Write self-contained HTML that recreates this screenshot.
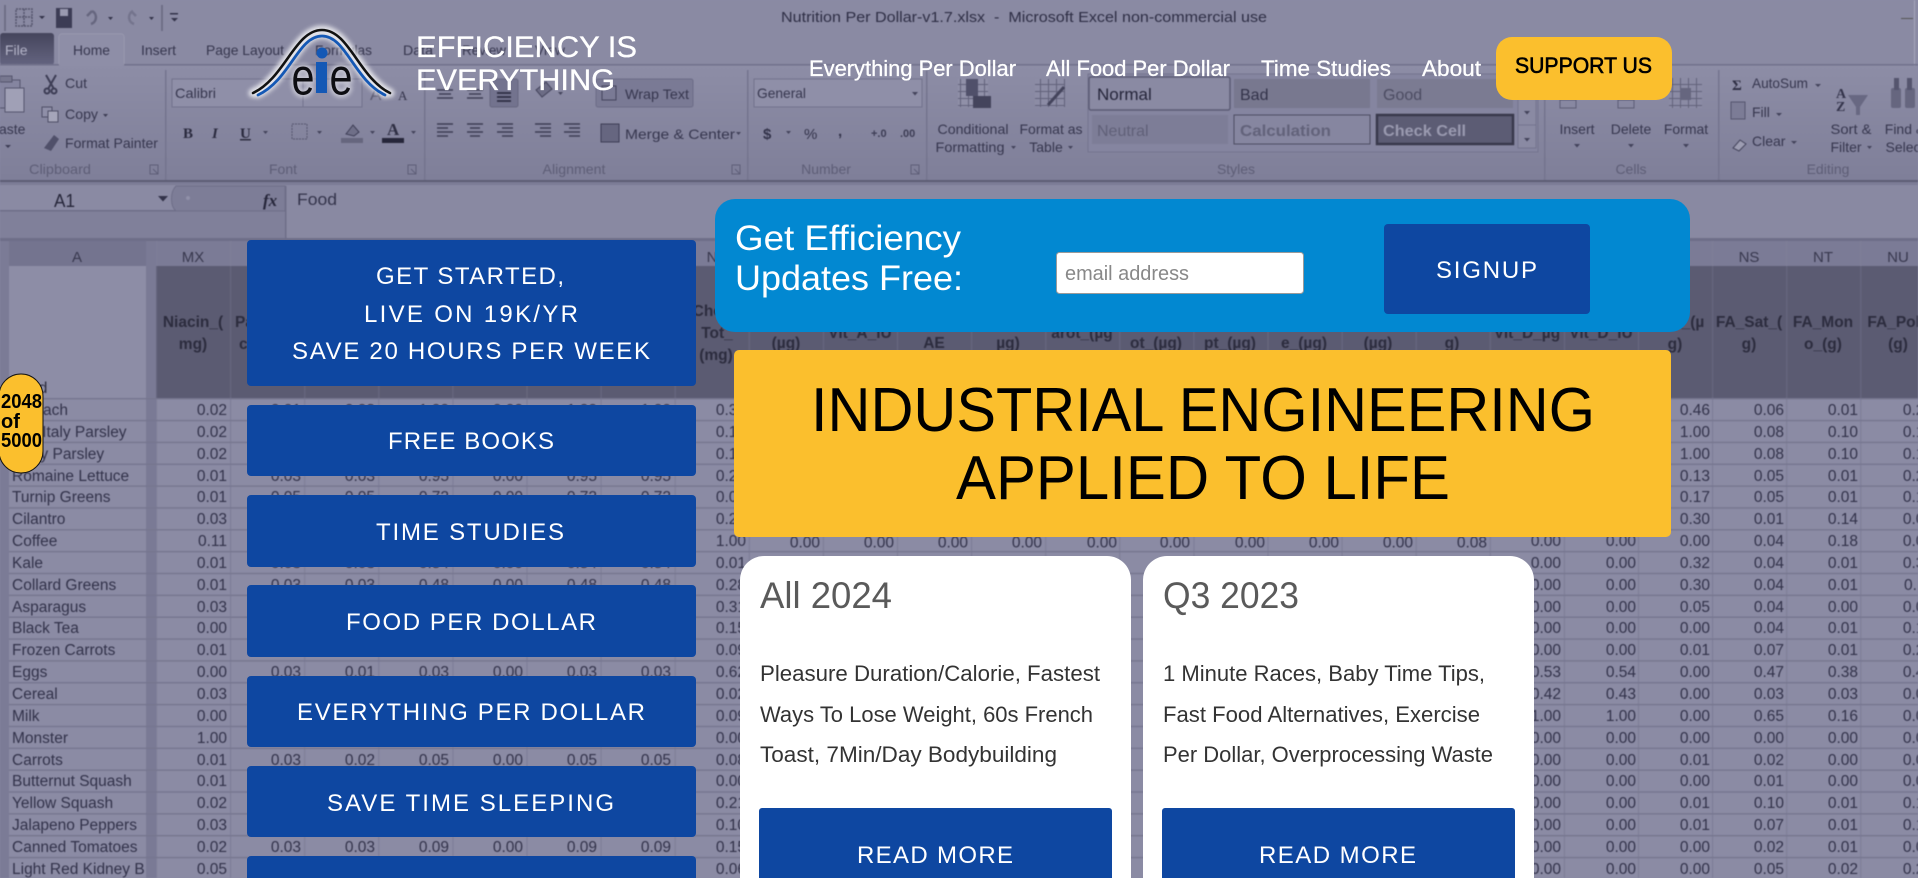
<!DOCTYPE html>
<html lang="en"><head><meta charset="utf-8"><title>Efficiency Is Everything</title>
<style>
html,body{margin:0;padding:0;background:#8b8ba4}
#p{position:relative;width:1918px;height:878px;overflow:hidden;font-family:"Liberation Sans",sans-serif}
svg{position:absolute;left:0;top:0}
#x{position:absolute;left:0;top:0;width:1918px;height:878px;filter:blur(.55px);overflow:hidden}
.c{position:absolute;top:400px;text-align:right;font-size:15.5px;line-height:21.85px;color:#32324a;white-space:nowrap;width:74px}
.n{text-align:left;left:12px;width:133px;overflow:hidden}
.t{font-size:14px;fill:#36364e}
.h{font-size:15.5px;font-weight:700;fill:#2c2c3e;text-anchor:middle}
</style></head><body><div id="p">
<div id="x">
<svg width="1918" height="878" viewBox="0 0 1918 878">
<defs>
<linearGradient id="r" x1="0" y1="0" x2="0" y2="1"><stop offset="0" stop-color="#8d8da6"/><stop offset="1" stop-color="#7f7f99"/></linearGradient>
<linearGradient id="f" x1="0" y1="0" x2="0" y2="1"><stop offset="0" stop-color="#45455c"/><stop offset="1" stop-color="#646480"/></linearGradient>
<pattern id="hl" x="0" y="398" width="10" height="21.85" patternUnits="userSpaceOnUse"><rect width="10" height="1.4" fill="#76768f"/></pattern>
<pattern id="vl" x="230" y="0" width="74.1" height="10" patternUnits="userSpaceOnUse"><rect width="1.2" height="10" fill="#7e7e98"/></pattern>
<pattern id="vd" x="230" y="0" width="74.1" height="10" patternUnits="userSpaceOnUse"><rect width="1.2" height="10" fill="#67677f"/></pattern>
<pattern id="gr" x="0" y="0" width="8" height="7" patternUnits="userSpaceOnUse"><path d="M0 .5H8M.5 0V7" stroke="#62627b" stroke-width="1" fill="none"/></pattern>
</defs>
<rect width="1918" height="878" fill="#8b8ba4"/>
<!-- title bar -->
<rect width="1918" height="65" fill="#8a8aa3"/>
<text x="781" y="22" font-size="15" fill="#2e2e45" textLength="486" lengthAdjust="spacingAndGlyphs">Nutrition Per Dollar-v1.7.xlsx&#160;&#160;-&#160;&#160;Microsoft Excel non-commercial use</text>
<rect x="1901" y="18" width="12" height="1" fill="#555"/><rect x="1914" y="0" width="1" height="118" fill="#a5a5bb"/>
<g fill="none" stroke="#55556d" stroke-width="1.5">
<rect x="16" y="9" width="16" height="17" stroke-dasharray="2 1"/><line x1="24" y1="9" x2="24" y2="26" stroke-dasharray="2 1"/><line x1="16" y1="17" x2="32" y2="17" stroke-dasharray="2 1"/>
<path d="M92 11a7 7 0 0 1-1 13M92 11l-5 5" stroke="#66667f" stroke-width="2.5"/>
<path d="M133 11a7 7 0 0 0 1 13M131 11l5 5" stroke="#74748d" stroke-width="2.5"/>
<line x1="162" y1="5" x2="162" y2="31" stroke="#66667f"/><line x1="5" y1="5" x2="5" y2="31" stroke="#66667f"/>
</g>
<rect x="56" y="8" width="16" height="20" fill="#3c3c55"/><rect x="60" y="9" width="8" height="7" fill="#9a9ab0"/>
<path d="M39 16h6l-3 3zM108 17h5l-2.500 3zM149 17h5l-2.500 3zM171 18h7l-3.500 3.500z" fill="#33334a"/><rect x="170" y="13" width="8" height="1.500" fill="#33334a"/>
<!-- tabs -->
<rect x="0" y="33" width="54" height="32" rx="3" fill="url(#f)"/>
<text x="5" y="55" class="t" style="fill:#b4b4c8">File</text>
<path d="M59 65V37a3 3 0 0 1 3-3h59a3 3 0 0 1 3 3v28" fill="#94949f" stroke="#a2a2b6"/>
<rect x="59" y="34" width="65" height="32" rx="3" fill="#8e8ea7"/>
<text x="73" y="55" class="t" textLength="37" lengthAdjust="spacingAndGlyphs">Home</text>
<text x="141" y="55" class="t" textLength="35" lengthAdjust="spacingAndGlyphs">Insert</text>
<text x="206" y="55" class="t" textLength="78" lengthAdjust="spacingAndGlyphs">Page Layout</text>
<text x="315" y="55" class="t" textLength="57" lengthAdjust="spacingAndGlyphs">Formulas</text>
<text x="403" y="55" class="t" textLength="30" lengthAdjust="spacingAndGlyphs">Data</text>
<text x="462" y="55" class="t" textLength="44" lengthAdjust="spacingAndGlyphs">Review</text>
<text x="535" y="55" class="t" textLength="30" lengthAdjust="spacingAndGlyphs">View</text>
<rect x="124" y="64" width="1794" height="1.500" fill="#72728c"/><rect x="0" y="64" width="59" height="1.500" fill="#72728c"/>
<!-- ribbon -->
<rect y="66" width="1918" height="114" fill="url(#r)"/>
<rect y="180" width="1918" height="2" fill="#5c5c74"/><rect y="182" width="1918" height="3" fill="#7c7c96"/>
<g fill="#74748e">
<rect x="165" y="70" width="1.500" height="110"/><rect x="424" y="70" width="1.500" height="110"/><rect x="747" y="70" width="1.500" height="110"/><rect x="926" y="70" width="1.500" height="110"/><rect x="1544" y="70" width="1.500" height="110"/><rect x="1718" y="70" width="1.500" height="110"/>
</g>
<g font-size="14" fill="#5d5d76" text-anchor="middle">
<text x="60" y="174" textLength="62" lengthAdjust="spacingAndGlyphs">Clipboard</text><text x="283" y="174">Font</text><text x="574" y="174" textLength="63" lengthAdjust="spacingAndGlyphs">Alignment</text><text x="826" y="174">Number</text><text x="1236" y="174">Styles</text><text x="1631" y="174">Cells</text><text x="1828" y="174">Editing</text>
</g>
<g fill="none" stroke="#5e5e77"><path d="M150 165h8v9h-8zM153 169l5 5"/><path d="M408 165h8v9h-8zM411 169l5 5"/><path d="M732 165h8v9h-8zM735 169l5 5"/><path d="M911 165h8v9h-8zM914 169l5 5"/></g>
<!-- clipboard -->
<rect x="-4" y="80" width="24" height="28" fill="#8585a0" stroke="#55556e"/><rect x="5" y="88" width="19" height="24" fill="#a0a0b6" stroke="#55556e"/><rect x="0" y="76" width="12" height="6" fill="#77778f" stroke="#55556e"/>
<text x="-1" y="134" class="t">aste</text><path d="M5 145h6l-3 3z" fill="#3d3d55"/>
<text x="65" y="88" class="t" textLength="22" lengthAdjust="spacingAndGlyphs">Cut</text>
<text x="65" y="119" class="t" textLength="33" lengthAdjust="spacingAndGlyphs">Copy</text>
<text x="65" y="148" class="t" textLength="93" lengthAdjust="spacingAndGlyphs">Format Painter</text>
<path d="M46 75l8 14M56 75l-8 14" stroke="#3d3d55" stroke-width="2"/><circle cx="47" cy="91" r="2.500" fill="none" stroke="#3d3d55" stroke-width="2"/><circle cx="54" cy="91" r="2.500" fill="none" stroke="#3d3d55" stroke-width="2"/>
<rect x="42" y="107" width="10" height="10" fill="#8f8fa8" stroke="#4e4e66"/><rect x="48" y="111" width="10" height="11" fill="#a5a5ba" stroke="#4e4e66"/>
<path d="M44 148l10-13 5 4-8 12z" fill="#50506a"/><path d="M103 114h5l-2.500 3z" fill="#3d3d55"/>
<!-- font -->
<rect x="172" y="79" width="131" height="28" fill="#8f8fa8" stroke="#72728c"/><rect x="303" y="79" width="59" height="28" fill="#8f8fa8" stroke="#72728c"/>
<text x="175" y="98" class="t" textLength="41" lengthAdjust="spacingAndGlyphs">Calibri</text>
<text x="183" y="138" font-size="15" font-weight="700" font-family="Liberation Serif" fill="#2b2b3f">B</text>
<text x="212" y="138" font-size="15" font-style="italic" font-weight="700" font-family="Liberation Serif" fill="#2b2b3f">I</text>
<text x="240" y="138" font-size="15" font-weight="700" font-family="Liberation Serif" fill="#2b2b3f" text-decoration="underline">U</text>
<path d="M263 131h5l-2.500 3zM317 131h5l-2.500 3zM370 131h5l-2.500 3zM411 131h5l-2.500 3z" fill="#44445c"/>
<rect x="292" y="124" width="15" height="15" fill="none" stroke="#55556e" stroke-dasharray="2 1"/>
<rect x="341" y="138" width="22" height="5" fill="#66667e"/><path d="M346 134l7-9 6 7-5 4z" fill="#6f6f88" stroke="#3d3d55"/>
<text x="387" y="135" font-size="17" font-weight="700" font-family="Liberation Serif" fill="#2f2f44">A</text><rect x="382" y="138" width="22" height="5" fill="#26263a"/>
<text x="370" y="100" font-size="17" fill="#5a5a72">A</text><text x="398" y="100" font-size="13" font-family="Liberation Serif" fill="#33334a">A</text>
<!-- align -->
<g stroke="#3d3d55" stroke-width="1.600">
<path d="M437 90h16M439 94h12M437 98h16M467 90h16M469 94h12M467 98h16"/>
<path d="M437 124h16M437 128h11M437 132h16M437 136h11M467 124h16M470 128h10M467 132h16M470 136h10M497 124h16M502 128h11M497 132h16M502 136h11"/>
<path d="M535 124h16M540 128h11M535 132h16M540 136h11M564 124h16M569 128h11M564 132h16M569 136h11"/>
</g>
<rect x="490" y="79" width="28" height="28" rx="2" fill="#73738e" stroke="#66667f"/><path d="M497 93h14M497 97h14M497 101h14" stroke="#2d2d42" stroke-width="1.800"/>
<path d="M536 90l10-8 6 7-10 8z" fill="#6c6c85" stroke="#44445c"/><path d="M558 92h5l-2.500 3z" fill="#44445c"/>
<rect x="596" y="79" width="97" height="28" rx="2" fill="#7a7a95" stroke="#6c6c87"/>
<rect x="602" y="86" width="14" height="14" fill="none" stroke="#44445c"/>
<text x="625" y="99" class="t" textLength="64" lengthAdjust="spacingAndGlyphs">Wrap Text</text>
<rect x="601" y="124" width="18" height="18" fill="#666680" stroke="#3d3d55"/>
<text x="625" y="139" class="t" textLength="110" lengthAdjust="spacingAndGlyphs">Merge &amp; Center</text><path d="M736 132h5l-2.500 3z" fill="#44445c"/>
<!-- number -->
<rect x="754" y="79" width="168" height="28" fill="#8f8fa8" stroke="#72728c"/>
<text x="757" y="98" class="t" textLength="49" lengthAdjust="spacingAndGlyphs">General</text><path d="M912 92h6l-3 3.500z" fill="#44445c"/>
<text x="763" y="139" font-size="15" font-weight="700" fill="#33334a">$</text><text x="804" y="139" font-size="15" fill="#33334a">%</text><text x="838" y="136" font-size="15" font-weight="700" fill="#33334a">,</text>
<path d="M786 131h5l-2.500 3z" fill="#44445c"/>
<text x="871" y="137" font-size="11" font-weight="700" fill="#3d3d55">+.0</text><text x="900" y="137" font-size="11" font-weight="700" fill="#3d3d55">.00</text>
<!-- styles -->
<rect x="958" y="79" width="30" height="28" fill="#9090a8"/><rect x="958" y="79" width="30" height="28" fill="url(#gr)"/><rect x="966" y="79" width="12" height="17" fill="#50506a"/><rect x="973" y="96" width="18" height="12" fill="#44445c"/>
<rect x="1035" y="79" width="30" height="28" fill="#8c8ca5"/><rect x="1035" y="79" width="30" height="28" fill="url(#gr)"/><path d="M1048 105l16-18" stroke="#44445c" stroke-width="3"/>
<g font-size="14" fill="#36364e" text-anchor="middle">
<text x="973" y="134" textLength="71" lengthAdjust="spacingAndGlyphs">Conditional</text><text x="970" y="152" textLength="69" lengthAdjust="spacingAndGlyphs">Formatting</text>
<text x="1051" y="134" textLength="63" lengthAdjust="spacingAndGlyphs">Format as</text><text x="1046" y="152">Table</text>
<text x="1577" y="134">Insert</text><text x="1631" y="134">Delete</text><text x="1686" y="134">Format</text>
<text x="1851" y="134" textLength="41" lengthAdjust="spacingAndGlyphs">Sort &amp;</text><text x="1846" y="152">Filter</text><text x="1905" y="134">Find &amp;</text><text x="1905" y="152">Select</text>
</g>
<path d="M1011 146h5l-2.500 3zM1068 146h5l-2.500 3zM1574 144h6l-3 3.500zM1628 144h6l-3 3.500zM1683 144h6l-3 3.500zM1867 146h5l-2.500 3z" fill="#44445c"/>
<rect x="1088" y="74" width="450" height="78" fill="#8585a0" stroke="#74748e"/>
<rect x="1089" y="77" width="141" height="33" rx="2" fill="#8a8aa3" stroke="#5c5c75" stroke-width="1.500"/>
<text x="1097" y="100" font-size="17" fill="#25253a">Normal</text>
<rect x="1234" y="79" width="136" height="29" fill="#78788f"/><text x="1240" y="100" font-size="16" fill="#33334a">Bad</text>
<rect x="1377" y="79" width="136" height="29" fill="#7b7b92"/><text x="1383" y="100" font-size="16" fill="#4c4c62">Good</text>
<rect x="1092" y="115" width="136" height="29" fill="#7d7d97"/><text x="1097" y="136" font-size="16" fill="#606078">Neutral</text>
<rect x="1234" y="115" width="136" height="29" fill="#8686a0" stroke="#4c4c62"/><text x="1240" y="136" font-size="16" font-weight="700" fill="#62627a" textLength="91" lengthAdjust="spacingAndGlyphs">Calculation</text>
<rect x="1377" y="115" width="136" height="29" fill="#5c5c74" stroke="#39394c" stroke-width="2.500"/><text x="1383" y="136" font-size="16" font-weight="700" fill="#9a9ab0" textLength="83" lengthAdjust="spacingAndGlyphs">Check Cell</text>
<rect x="1518" y="75" width="18" height="73" fill="#8a8aa3" stroke="#74748e"/><path d="M1518 99h18M1518 125h18" stroke="#74748e"/>
<path d="M1524 111h6l-3 3.500zM1524 138h6l-3 3.500z" fill="#44445c"/>
<rect x="1669" y="78" width="33" height="30" fill="#8b8ba4"/><rect x="1669" y="78" width="33" height="30" fill="url(#gr)"/><rect x="1680" y="88" width="11" height="12" fill="#66667f"/>
<rect x="1560" y="100" width="16" height="8" fill="none" stroke="#5c5c75"/><rect x="1618" y="100" width="16" height="8" fill="none" stroke="#5c5c75"/>
<text x="1732" y="90" font-size="15" font-weight="700" font-family="Liberation Serif" fill="#2f2f44">Σ</text>
<text x="1752" y="88" class="t" textLength="56" lengthAdjust="spacingAndGlyphs">AutoSum</text><text x="1752" y="117" class="t">Fill</text><text x="1752" y="146" class="t">Clear</text>
<rect x="1731" y="102" width="14" height="17" fill="#7c7c96" stroke="#55556e"/><path d="M1733 148l7-8 6 4-7 7z" fill="#9d9db2" stroke="#44445c"/>
<path d="M1815 84h6l-3 3zM1776 113h6l-3 3zM1791 141h6l-3 3z" fill="#44445c"/>
<text x="1836" y="98" font-size="14" font-weight="700" font-family="Liberation Serif" fill="#33334a">A</text><text x="1836" y="111" font-size="14" font-weight="700" font-family="Liberation Serif" fill="#33334a">Z</text>
<path d="M1848 95h20l-8 12v8h-4v-8z" fill="#686882"/>
<rect x="1891" y="88" width="10" height="20" rx="2" fill="#66667f"/><rect x="1905" y="88" width="10" height="20" rx="2" fill="#66667f"/><rect x="1894" y="78" width="5" height="12" fill="#55556e"/><rect x="1907" y="78" width="5" height="12" fill="#55556e"/>
<!-- formula bar -->
<rect y="185" width="1918" height="53" fill="#8989a2"/>
<rect x="0" y="185" width="178" height="26" fill="#8a8aa3"/>
<rect x="0" y="211" width="286" height="27" fill="#80809a"/><rect x="0" y="210" width="286" height="1.500" fill="#6e6e88"/>
<path d="M176 186c-6 6-6 20 0 25H285V186z" fill="#7d7d97" stroke="#6e6e88"/>
<rect x="285" y="186" width="1.500" height="52" fill="#6e6e88"/>
<text x="54" y="207" font-size="18" fill="#26263a" textLength="21" lengthAdjust="spacingAndGlyphs">A1</text>
<path d="M158 196h10l-5 5.500z" fill="#33334a"/>
<circle cx="188" cy="198" r="2" fill="#9090a8"/>
<text x="263" y="206" font-size="17" font-style="italic" font-weight="700" font-family="Liberation Serif" fill="#26263a">fx</text>
<text x="297" y="205" font-size="17" fill="#33334a" textLength="40" lengthAdjust="spacingAndGlyphs">Food</text>
<rect y="238" width="1918" height="3" fill="#6e6e88"/>
<!-- sheet -->
<rect y="241" width="1918" height="25" fill="#7b7b96"/>
<rect x="156" y="266" width="1762" height="132" fill="#5b5b72"/>
<rect x="9" y="266" width="137" height="132" fill="#8d8da6"/>
<rect x="0" y="241" width="9" height="637" fill="#7b7b96"/>
<rect x="146" y="241" width="10" height="637" fill="#7a7a95"/>
<rect x="156" y="398" width="1762" height="480" fill="url(#vl)"/>
<rect x="156" y="241" width="1762" height="25" fill="url(#vl)"/>
<rect x="156" y="266" width="1762" height="132" fill="url(#vd)"/>
<rect x="9" y="398" width="1909" height="480" fill="url(#hl)"/>
<rect x="9" y="241" width="137" height="25" fill="#74748f"/>
<text x="77" y="262" text-anchor="middle" font-size="15" fill="#38384e">A</text>
<text x="193" y="262" text-anchor="middle" font-size="15" fill="#38384e">MX</text>
<text x="712" y="262" text-anchor="middle" font-size="15" fill="#38384e">N</text>
<text x="1749" y="262" text-anchor="middle" font-size="15" fill="#38384e">NS</text>
<text x="1823" y="262" text-anchor="middle" font-size="15" fill="#38384e">NT</text>
<text x="1898" y="262" text-anchor="middle" font-size="15" fill="#38384e">NU</text>
<text x="12" y="393" font-size="15.500" fill="#2c2c3e">Food</text>
<text x="193" y="327" class="h">Niacin_(</text><text x="193" y="349" class="h">mg)</text>
<text x="235" y="327" class="h" style="text-anchor:start">Pantoth</text><text x="239" y="349" class="h" style="text-anchor:start">c_(mg)</text>
<text x="712" y="316" class="h">Choli</text><text x="717" y="338" class="h">Tot_</text><text x="716" y="360" class="h">(mg)</text>
<text x="786" y="348" class="h">(µg)</text><text x="860" y="338" class="h">Vit_A_IU</text><text x="934" y="348" class="h">AE</text><text x="1008" y="348" class="h">µg)</text><text x="1082" y="338" class="h">arot_(µg</text><text x="1156" y="348" class="h">ot_(µg)</text><text x="1230" y="348" class="h">pt_(µg)</text><text x="1304" y="348" class="h">e_(µg)</text><text x="1378" y="348" class="h">(µg)</text><text x="1452" y="348" class="h">g)</text><text x="1527" y="338" class="h">Vit_D_µg</text><text x="1601" y="338" class="h">Vit_D_IU</text>
<text x="1693" y="327" class="h">_(µ</text><text x="1675" y="349" class="h">g)</text>
<text x="1749" y="327" class="h">FA_Sat_(</text><text x="1749" y="349" class="h">g)</text>
<text x="1823" y="327" class="h">FA_Mon</text><text x="1823" y="349" class="h">o_(g)</text>
<text x="1898" y="327" class="h">FA_Poly</text><text x="1898" y="349" class="h">(g)</text>
<!-- coffee row values -->
<g font-size="15.500" fill="#32324a" text-anchor="end">
<text x="820" y="547.600">0.00</text><text x="894" y="547.600">0.00</text><text x="968" y="547.600">0.00</text><text x="1042" y="547.600">0.00</text><text x="1117" y="547.600">0.00</text><text x="1190" y="547.600">0.00</text><text x="1265" y="547.600">0.00</text><text x="1339" y="547.600">0.00</text><text x="1413" y="547.600">0.00</text><text x="1487" y="547.600">0.08</text>
</g>
</svg>
<div class="c n">Spinach<br>Flat Italy Parsley<br>Curly Parsley<br>Romaine Lettuce<br>Turnip Greens<br>Cilantro<br>Coffee<br>Kale<br>Collard Greens<br>Asparagus<br>Black Tea<br>Frozen Carrots<br>Eggs<br>Cereal<br>Milk<br>Monster<br>Carrots<br>Butternut Squash<br>Yellow Squash<br>Jalapeno Peppers<br>Canned Tomatoes<br>Light Red Kidney Beans</div>
<div class="c" style="left:153px">0.02<br>0.02<br>0.02<br>0.01<br>0.01<br>0.03<br>0.11<br>0.01<br>0.01<br>0.03<br>0.00<br>0.01<br>0.00<br>0.03<br>0.00<br>1.00<br>0.01<br>0.01<br>0.02<br>0.03<br>0.02<br>0.05</div>
<div class="c" style="left:227px">0.01<br><br><br>0.03<br>0.05<br><br><br>0.03<br>0.03<br><br><br><br>0.03<br><br><br><br>0.03<br><br><br><br>0.03</div>
<div class="c" style="left:301px">0.03<br><br><br>0.03<br>0.05<br><br><br>0.03<br>0.03<br><br><br><br>0.01<br><br><br><br>0.02<br><br><br><br>0.03</div>
<div class="c" style="left:375px">1.00<br><br><br>0.95<br>0.72<br><br><br>0.54<br>0.48<br><br><br><br>0.03<br><br><br><br>0.05<br><br><br><br>0.09</div>
<div class="c" style="left:449px">0.00<br><br><br>0.00<br>0.00<br><br><br>0.00<br>0.00<br><br><br><br>0.00<br><br><br><br>0.00<br><br><br><br>0.00</div>
<div class="c" style="left:523px">1.00<br><br><br>0.95<br>0.72<br><br><br>0.54<br>0.48<br><br><br><br>0.03<br><br><br><br>0.05<br><br><br><br>0.09</div>
<div class="c" style="left:597px">1.00<br><br><br>0.95<br>0.72<br><br><br>0.54<br>0.48<br><br><br><br>0.03<br><br><br><br>0.05<br><br><br><br>0.09</div>
<div class="c" style="left:672px">0.30<br>0.13<br>0.12<br>0.23<br>0.05<br>0.28<br>1.00<br>0.01<br>0.28<br>0.31<br>0.15<br>0.09<br>0.62<br>0.02<br>0.09<br>0.00<br>0.08<br>0.00<br>0.21<br>0.10<br>0.15<br>0.06</div>
<div class="c" style="left:1487px"><br><br><br><br><br><br>0.00<br>0.00<br>0.00<br>0.00<br>0.00<br>0.00<br>0.53<br>0.42<br>1.00<br>0.00<br>0.00<br>0.00<br>0.00<br>0.00<br>0.00<br>0.00</div>
<div class="c" style="left:1562px"><br><br><br><br><br><br>0.00<br>0.00<br>0.00<br>0.00<br>0.00<br>0.00<br>0.54<br>0.43<br>1.00<br>0.00<br>0.00<br>0.00<br>0.00<br>0.00<br>0.00<br>0.00</div>
<div class="c" style="left:1636px">0.46<br>1.00<br>1.00<br>0.13<br>0.17<br>0.30<br>0.00<br>0.32<br>0.30<br>0.05<br>0.00<br>0.01<br>0.00<br>0.00<br>0.00<br>0.00<br>0.01<br>0.00<br>0.01<br>0.01<br>0.00<br>0.00</div>
<div class="c" style="left:1710px">0.06<br>0.08<br>0.08<br>0.05<br>0.05<br>0.01<br>0.04<br>0.04<br>0.04<br>0.04<br>0.04<br>0.07<br>0.47<br>0.03<br>0.65<br>0.00<br>0.02<br>0.01<br>0.10<br>0.07<br>0.02<br>0.05</div>
<div class="c" style="left:1784px">0.01<br>0.10<br>0.10<br>0.01<br>0.01<br>0.14<br>0.18<br>0.01<br>0.01<br>0.00<br>0.01<br>0.01<br>0.38<br>0.03<br>0.16<br>0.00<br>0.00<br>0.00<br>0.01<br>0.01<br>0.01<br>0.02</div>
<div class="c" style="left:1859px">0.21<br>0.13<br>0.13<br>0.21<br>0.12<br>0.06<br>0.01<br>0.31<br>0.11<br>0.04<br>0.12<br>0.20<br>0.41<br>0.01<br>0.04<br>0.00<br>0.01<br>0.01<br>0.13<br>0.12<br>0.03<br>0.21</div>
</div>

<svg width="1918" height="878" viewBox="0 0 1918 878" font-family="Liberation Sans, sans-serif">
<defs><filter id="g" x="-20%" y="-20%" width="140%" height="140%"><feGaussianBlur stdDeviation="2"/></filter></defs>
<!-- logo -->
<g fill="none" stroke-linecap="round">
<path d="M253 93C285 78 295 30 322 30C349 30 359 78 390 93" stroke="#fff" stroke-width="9" opacity=".75" filter="url(#g)"/>
<path d="M258 95C290 80 298 36 322 36C346 36 354 80 385 95" stroke="#fff" stroke-width="7" opacity=".6" filter="url(#g)"/>
<path d="M253 93C285 78 295 30 322 30C349 30 359 78 390 93" stroke="#111" stroke-width="2.600"/>
<path d="M258 95C290 80 298 36 322 36C346 36 354 80 385 95" stroke="#1458b5" stroke-width="2.800"/>
</g>
<text x="291.500" y="94.500" font-size="52" fill="#fff" stroke="#fff" stroke-width="5" opacity=".5" textLength="23" lengthAdjust="spacingAndGlyphs" filter="url(#g)">e</text>
<text x="329.500" y="94.500" font-size="52" fill="#fff" stroke="#fff" stroke-width="5" opacity=".5" textLength="23" lengthAdjust="spacingAndGlyphs" filter="url(#g)">e</text>
<text x="291.500" y="94.500" font-size="52" fill="#0d0d12" textLength="23" lengthAdjust="spacingAndGlyphs">e</text>
<text x="329.500" y="94.500" font-size="52" fill="#0d0d12" textLength="23" lengthAdjust="spacingAndGlyphs">e</text>
<circle cx="322" cy="53" r="5.500" fill="#1458b5"/><rect x="316" y="62" width="11" height="31" fill="#1458b5"/>
<!-- header -->
<g fill="#fff" stroke="#fff" stroke-width=".3">
<text x="416" y="57" font-size="30" textLength="221" lengthAdjust="spacingAndGlyphs">EFFICIENCY IS</text>
<text x="416" y="90" font-size="30" textLength="199" lengthAdjust="spacingAndGlyphs">EVERYTHING</text>
<text x="809" y="76" font-size="22" textLength="207" lengthAdjust="spacingAndGlyphs">Everything Per Dollar</text>
<text x="1046" y="76" font-size="22" textLength="184" lengthAdjust="spacingAndGlyphs">All Food Per Dollar</text>
<text x="1261" y="76" font-size="22" textLength="130" lengthAdjust="spacingAndGlyphs">Time Studies</text>
<text x="1422" y="76" font-size="22" textLength="59" lengthAdjust="spacingAndGlyphs">About</text>
</g>
<rect x="1496" y="37" width="176" height="63" rx="16" fill="#fbbf2d"/>
<text x="1515" y="73" font-size="22" fill="#000" stroke="#000" stroke-width=".6" textLength="137" lengthAdjust="spacingAndGlyphs">SUPPORT US</text>
<!-- pill -->
<rect x="-1" y="374" width="44" height="99" rx="22" fill="#fbbf2d" stroke="#111"/>
<g font-size="20" font-weight="700" fill="#000"><text x="1" y="408" textLength="41" lengthAdjust="spacingAndGlyphs">2048</text><text x="1" y="428">of</text><text x="1" y="447" textLength="41" lengthAdjust="spacingAndGlyphs">5000</text></g>
<!-- side buttons -->
<g fill="#0e47a1">
<rect x="247" y="240" width="449" height="146" rx="4"/><rect x="247" y="405" width="449" height="71" rx="4"/><rect x="247" y="495" width="449" height="72" rx="4"/><rect x="247" y="585" width="449" height="72" rx="4"/><rect x="247" y="676" width="449" height="71" rx="4"/><rect x="247" y="766" width="449" height="71" rx="4"/><rect x="247" y="856" width="449" height="40" rx="4"/>
</g>
<g fill="#fff" font-size="24">
<text x="376" y="284" textLength="188">GET STARTED,</text>
<text x="364" y="322" textLength="214">LIVE ON 19K/YR</text>
<text x="292" y="359" textLength="358">SAVE 20 HOURS PER WEEK</text>
<text x="388" y="449" textLength="166">FREE BOOKS</text>
<text x="376" y="540" textLength="188">TIME STUDIES</text>
<text x="346" y="630" textLength="250">FOOD PER DOLLAR</text>
<text x="297" y="720" textLength="348">EVERYTHING PER DOLLAR</text>
<text x="327" y="811" textLength="287">SAVE TIME SLEEPING</text>
</g>
<!-- newsletter -->
<rect x="715" y="199" width="975" height="133" rx="20" fill="#0288d1"/>
<text x="735" y="250" font-size="35" fill="#fff" textLength="226" lengthAdjust="spacingAndGlyphs">Get Efficiency</text>
<text x="735" y="290" font-size="35" fill="#fff" textLength="228" lengthAdjust="spacingAndGlyphs">Updates Free:</text>
<rect x="1056.500" y="252.500" width="247" height="41" rx="3" fill="#fff" stroke="#9a9a9a"/>
<text x="1065" y="280" font-size="20" fill="#888" textLength="124" lengthAdjust="spacingAndGlyphs">email address</text>
<rect x="1384" y="224" width="206" height="90" rx="4" fill="#0e47a1"/>
<text x="1436" y="278" font-size="24" fill="#fff" textLength="101">SIGNUP</text>
<!-- hero -->
<rect x="734" y="350" width="937" height="187" rx="5" fill="#fbbf2d"/>
<text x="811" y="431" font-size="62" fill="#000" textLength="784" lengthAdjust="spacingAndGlyphs">INDUSTRIAL ENGINEERING</text>
<text x="956" y="499" font-size="62" fill="#000" textLength="494" lengthAdjust="spacingAndGlyphs">APPLIED TO LIFE</text>
<!-- cards -->
<rect x="740" y="556" width="391" height="360" rx="24" fill="#fff"/>
<rect x="1143" y="556" width="391" height="360" rx="24" fill="#fff"/>
<text x="760" y="608" font-size="37" fill="#5a5a5a" textLength="132" lengthAdjust="spacingAndGlyphs">All 2024</text>
<text x="1163" y="608" font-size="37" fill="#5a5a5a" textLength="136" lengthAdjust="spacingAndGlyphs">Q3 2023</text>
<g font-size="22" fill="#333">
<text x="760" y="681" textLength="340" lengthAdjust="spacingAndGlyphs">Pleasure Duration/Calorie, Fastest</text>
<text x="760" y="722" textLength="333" lengthAdjust="spacingAndGlyphs">Ways To Lose Weight, 60s French</text>
<text x="760" y="762" textLength="297" lengthAdjust="spacingAndGlyphs">Toast, 7Min/Day Bodybuilding</text>
<text x="1163" y="681" textLength="322" lengthAdjust="spacingAndGlyphs">1 Minute Races, Baby Time Tips,</text>
<text x="1163" y="722" textLength="317" lengthAdjust="spacingAndGlyphs">Fast Food Alternatives, Exercise</text>
<text x="1163" y="762" textLength="330" lengthAdjust="spacingAndGlyphs">Per Dollar, Overprocessing Waste</text>
</g>
<rect x="759" y="808" width="353" height="90" rx="3" fill="#0e47a1"/>
<rect x="1162" y="808" width="353" height="90" rx="3" fill="#0e47a1"/>
<text x="857" y="863" font-size="24" fill="#fff" textLength="156">READ MORE</text>
<text x="1259" y="863" font-size="24" fill="#fff" textLength="157">READ MORE</text>
</svg>
</div></body></html>
